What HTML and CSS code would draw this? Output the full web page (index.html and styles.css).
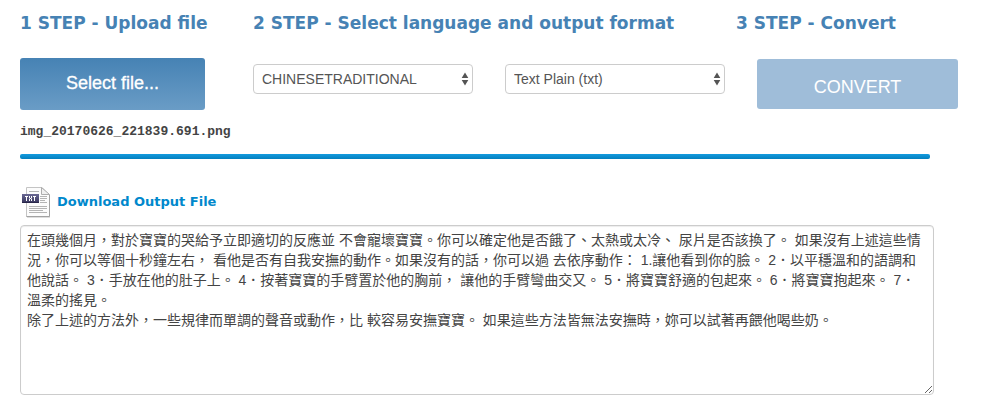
FILE: index.html
```html
<!DOCTYPE html>
<html lang="zh-Hant">
<head>
<meta charset="utf-8">
<meta name="viewport" content="width=device-width, initial-scale=1">
<title>Convert</title>
<link rel="stylesheet" href="styles.css">
</head>
<body>
<main class="page">
  <form class="steps">
    <section class="step">
      <h2 class="step-title">1 STEP - Upload file</h2>
      <button type="button" class="btn btn-select">Select file...</button>
      <p class="file-name">img_20170626_221839.691.png</p>
    </section>
    <section class="step">
      <h2 class="step-title">2 STEP - Select language and output format</h2>
      <div class="selects">
        <div class="select-box">
          <select class="select" aria-label="Language"><option>CHINESETRADITIONAL</option></select>
          <svg class="select-arrows" viewBox="0 0 8 14" aria-hidden="true"><path d="M4 0.500L7.300 6H0.700zM4 13.500L0.700 8H7.300z"/></svg>
        </div>
        <div class="select-box">
          <select class="select" aria-label="Output format"><option>Text Plain (txt)</option></select>
          <svg class="select-arrows" viewBox="0 0 8 14" aria-hidden="true"><path d="M4 0.500L7.300 6H0.700zM4 13.500L0.700 8H7.300z"/></svg>
        </div>
      </div>
    </section>
    <section class="step">
      <h2 class="step-title">3 STEP - Convert</h2>
      <button type="submit" class="btn btn-convert" disabled>CONVERT</button>
    </section>
  </form>
  <div class="progress"></div>
  <a class="download" href="#">
    <svg class="download-icon" viewBox="0 0 32 32" aria-hidden="true">
      <defs>
        <linearGradient id="tag" x1="0" y1="0" x2="0" y2="1"><stop offset="0" stop-color="#6a6894"/><stop offset="1" stop-color="#36345a"/></linearGradient>
      </defs>
      <path d="M4.500 1.500H20L27.500 9V30.500H4.500Z" fill="#fcfcfc" stroke="#c4c4c4"/>
      <path d="M27.500 9V30.500H4.500" fill="none" stroke="#a2a2a2"/>
      <path d="M5 31.500H28" stroke="#dedede"/>
      <path d="M19.500 1.500V8.500H27.500Z" fill="#f0f0f0" stroke="#adadad"/>
      <path d="M7 5.500H17M18 10.500H25M18 12.500H25M18 14.500H23M18 16.500H25M7 20.500H25M7 22.500H25M7 24.500H21M7 26.500H25" stroke="#b4b4b4"/>
      <path d="M0 8H17V17H0Z" fill="url(#tag)"/>
      <path d="M0 16.500H17" stroke="#29274a"/>
      <path d="M3 10.500H6M4.500 10V15M7.500 10V12L9.500 13V15M9.500 10V12L7.500 13V15M11 10.500H14M12.500 10V15" fill="none" stroke="#fff"/>
    </svg>
    <span>Download Output File</span>
  </a>
  <textarea class="output" aria-label="Output text" spellcheck="false">在頭幾個月，對於寶寶的哭給予立即適切的反應並 不會寵壞寶寶。你可以確定他是否餓了、太熱或太冷、 尿片是否該換了。 如果沒有上述這些情況，你可以等個十秒鐘左右， 看他是否有自我安撫的動作。如果沒有的話，你可以過 去依序動作： 1.讓他看到你的臉。 2．以平穩溫和的語調和他說話。 3．手放在他的肚子上。 4．按著寶寶的手臂置於他的胸前， 讓他的手臂彎曲交又。 5．將寶寶舒適的包起來。 6．將寶寶抱起來。 7．溫柔的搖見。
除了上述的方法外，一些規律而單調的聲音或動作，比 較容易安撫寶寶。 如果這些方法皆無法安撫時，妳可以試著再餵他喝些奶。</textarea>
</main>
</body>
</html>
```
FILE: styles.css
```css
* {
  box-sizing: border-box;
}

body {
  margin: 0;
  background: #fff;
  color: #444;
  font-family: "Liberation Sans", "Noto Sans CJK TC", sans-serif;
  font-size: 14px;
  line-height: 20px;
}

.page {
  padding: 13px 33px 16px 20px;
}

.steps {
  display: grid;
  grid-template-columns: 233fr 483fr 222fr;
}

.step-title {
  margin: 0 0 25px;
  color: #4682b4;
  font-family: "DejaVu Sans", sans-serif;
  font-size: 17px;
  font-weight: 700;
  line-height: 20px;
  white-space: nowrap;
}

.btn {
  display: block;
  border: 0;
  border-radius: 3px;
  color: #fff;
  font-family: inherit;
  font-size: 18px;
  line-height: 24px;
}

.btn-select {
  width: 185px;
  height: 52px;
  padding-bottom: 3px;
  background: linear-gradient(#4682b4, #6a9cc6);
  -webkit-text-stroke: 0.3px #fff;
}

.btn-convert {
  width: 201px;
  height: 50px;
  margin: 26px 0 0 auto;
  padding-top: 6px;
  background: #9fbdd9;
}

.file-name {
  margin: 12px 0 0;
  font-family: "Liberation Mono", monospace;
  font-size: 13px;
  font-weight: 700;
}

.selects {
  display: flex;
  gap: 32px;
  padding-top: 6px;
}

.select-box {
  position: relative;
  width: 220px;
}

.select {
  display: block;
  width: 100%;
  height: 30px;
  padding: 0 24px 0 8px;
  appearance: none;
  border: 1px solid #ccc;
  border-radius: 4px;
  background: #fff;
  color: #555;
  font: inherit;
}

.select-arrows {
  position: absolute;
  top: 8px;
  right: 4px;
  width: 8px;
  height: 14px;
  fill: #555;
  pointer-events: none;
}

.progress {
  height: 5px;
  margin: 12px 28px 0 0;
  border-radius: 2px;
  background: linear-gradient(#149bdf, #0480be);
}

.download {
  display: flex;
  align-items: center;
  gap: 3px;
  width: fit-content;
  margin: 27px 0 0 2px;
  color: #0088cc;
  font-family: "DejaVu Sans", sans-serif;
  font-size: 13px;
  font-weight: 700;
  text-decoration: none;
}

.download-icon {
  width: 32px;
  height: 32px;
}

.output {
  display: block;
  width: calc(100% - 24px);
  height: 170px;
  margin-top: 7px;
  padding: 4px 6px;
  border: 1px solid #ccc;
  border-radius: 4px;
  outline: 0;
  box-shadow: inset 0 1px 1px rgba(0, 0, 0, 0.075);
  color: #444;
  font: inherit;
}
```
